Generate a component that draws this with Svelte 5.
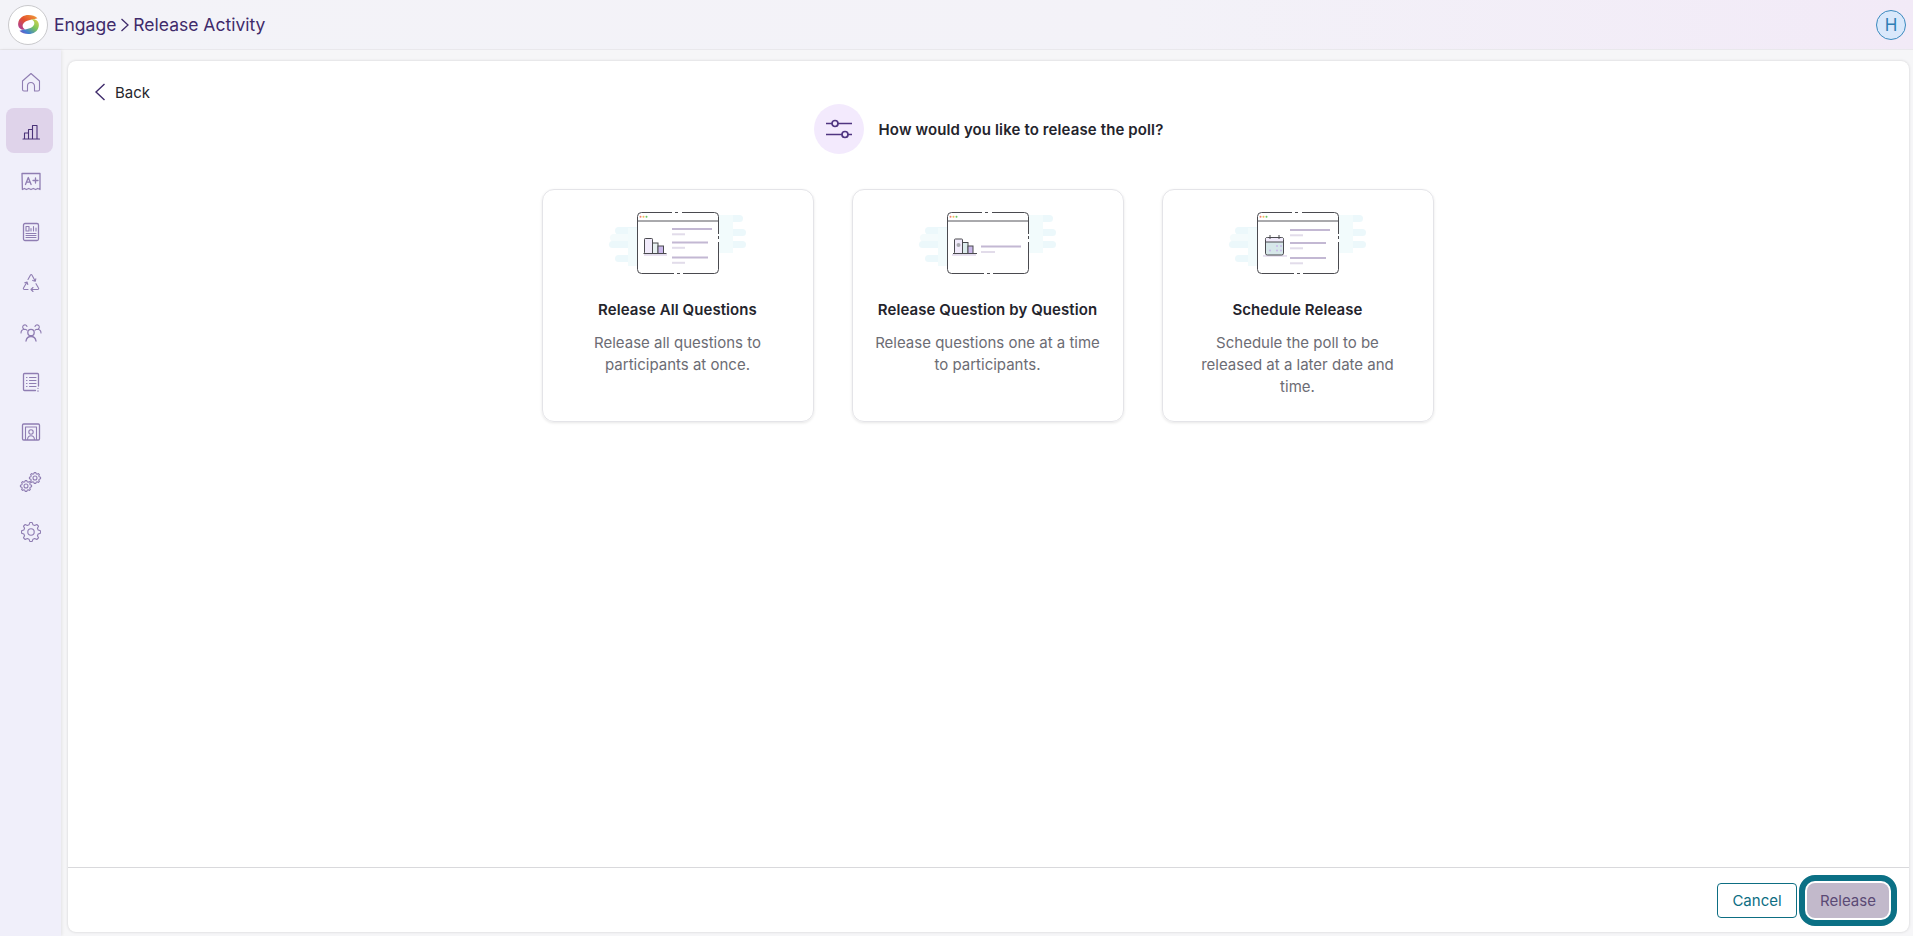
<script>
  const cards = [
    { title: 'Release All Questions', lines: ['Release all questions to', 'participants at once.'], kind: 'all' },
    { title: 'Release Question by Question', lines: ['Release questions one at a time', 'to participants.'], kind: 'single' },
    { title: 'Schedule Release', lines: ['Schedule the poll to be', 'released at a later date and', 'time.'], kind: 'schedule' }
  ];
  const navItems = ['home', 'chart', 'grade', 'report', 'recycle', 'people', 'list', 'board', 'gears', 'gear'];

  // outline of a cog, teeth alternate between two radii
  function cog(cx, cy, r, teeth) {
    const pts = [];
    const inner = r * 0.78;
    for (let i = 0; i < teeth; i++) {
      const step = (Math.PI * 2) / teeth;
      const a = i * step;
      const list = [
        [r, a - step * 0.16],
        [r, a + step * 0.16],
        [inner, a + step * 0.34],
        [inner, a + step * 0.66]
      ];
      for (const [rad, ang] of list) {
        pts.push((cx + rad * Math.cos(ang)).toFixed(2) + ' ' + (cy + rad * Math.sin(ang)).toFixed(2));
      }
    }
    return 'M' + pts.join('L') + 'z';
  }
</script>

{#snippet navIcon(name)}
  <svg class="nav-svg" viewBox="0 0 24 24" width="24" height="24" fill="none" stroke="currentColor" stroke-width="1.1" stroke-linecap="round" stroke-linejoin="round">
    {#if name === 'home'}
      <path d="M3.500 11 12 3.500 20.500 11v8.500a1.500 1.500 0 0 1-1.500 1.500h-3.500v-5a3.500 3.500 0 0 0-7 0v5H5a1.500 1.500 0 0 1-1.500-1.500z" />
    {:else if name === 'chart'}
      <path d="M4 20h16.500M5.500 20v-6h4v6M9.500 20v-9.500h4V20M13.500 20V6.500H18V20" />
    {:else if name === 'grade'}
      <path d="M3 3.500h18v16l-2.200-1-2.200 1-2.300-1-2.300 1-2.300-1-2.300 1-2-1-2 1z" stroke-width="1.300" />
      <path d="M6.500 14.500 9.300 7.500l2.800 7M7.600 12.200h3.400M14 10.500h5M16.500 8v5" stroke-width="1.300" />
    {:else if name === 'report'}
      <rect x="4.500" y="3.500" width="15" height="17" rx="1.500" stroke-width="1.300" />
      <path d="M7 6.500h3v4.500H7zM12 11V8.500M14.500 11V6.500M17 11V8M7 13.500h10M7 15.500h10M7 17.500h10" />
    {:else if name === 'recycle'}
      <path d="M9 9.500 11.500 5c.4-.7 1-.7 1.400 0l3.300 6M16.800 8.800l-.6 2.500-2.500-.9M8 12l-3.500 6c-.4.800 0 1.500 1 1.500H9M5.800 12.800 8 12l.8 2.500M12 19.500h6.500c1 0 1.500-.8 1-1.500l-2.500-4.300M14 17.500l-2 2 2 2" />
    {:else if name === 'people'}
      <circle cx="12" cy="12.500" r="3.200" stroke-width="1.300" />
      <path d="M7 21c.5-3 2.300-4.500 5-4.500s4.500 1.500 5 4.500" stroke-width="1.300" />
      <path d="M8 6.500a2.200 2.200 0 1 0-3.500 2.300M16 6.500a2.200 2.200 0 1 1 3.500 2.300" />
      <path d="M2 13c0-2 1-3.500 3.500-3.800 1 0 2 .3 2.500 1M22 13c0-2-1-3.500-3.500-3.800-1 0-2 .3-2.500 1" />
    {:else if name === 'list'}
      <path d="M19.500 16V4.500a1 1 0 0 0-1-1H5.500a1 1 0 0 0-1 1v15a1 1 0 0 0 1 1h11" stroke-width="1.300" />
      <path d="M7.500 7.500h.5M10.500 7.500h6.500M7.500 10.500h.5M10.500 10.500h6.500M7.500 13.500h.5M10.500 13.500h6.500M7.500 16.500h.5M10.500 16.500h6.500M19 18.300v.1M18.600 21h.8" />
    {:else if name === 'board'}
      <rect x="3.500" y="4" width="17" height="16" rx="1.200" stroke-width="1.300" />
      <path d="M6.500 19.500V7h11v12.500" />
      <circle cx="12" cy="12" r="2.200" />
      <path d="M8.500 19.500c.3-2.300 1.500-3.700 3.500-3.700s3.200 1.400 3.500 3.700" />
    {:else if name === 'gears'}
      <path d={cog(16, 8, 5.600, 8)} />
      <circle cx="16" cy="8" r="2" />
      <path d={cog(7, 16, 5.600, 8)} />
      <circle cx="7" cy="16" r="2" />
    {:else}
      <path d={cog(12, 12, 9.500, 8)} />
      <circle cx="12" cy="12" r="3.200" />
    {/if}
  </svg>
{/snippet}

{#snippet textLines(x, rows)}
  {#each rows as y, i}
    <rect x={x} y={y} width={i === 0 ? 40 : 36} height="2" fill="#c3b8d3" />
    <rect x={x} y={y + 5.300} width="13" height="2" fill="#e2dcea" />
  {/each}
{/snippet}

{#snippet illustration(kind)}
  <svg class="illo" viewBox="0 0 140 70" width="140" height="70">
    <g fill="#ecf8fb">
      <rect x="7" y="19" width="32" height="7.500" rx="3.700" />
      <rect x="2" y="26" width="36" height="7.500" rx="3.700" fill="#f4fbfc" />
      <rect x="1" y="33" width="36" height="7" rx="3.500" />
      <rect x="7" y="47" width="30" height="7" rx="3.500" />
      <rect x="105" y="7" width="30" height="7" rx="3.500" />
      <rect x="110" y="21" width="28" height="7" rx="3.500" />
      <rect x="108" y="33" width="30" height="7" rx="3.500" />
      <rect x="111" y="7" width="14" height="38" fill="#f2fbfc" />
      <rect x="20" y="20" width="14" height="38" fill="#f2fbfc" />
    </g>
    <rect x="29.500" y="4.500" width="81" height="61" rx="4" fill="#fff" stroke="#4a4a4f" stroke-width="1" />
    <path d="M29.500 13h81" stroke="#55555a" stroke-width="1" />
    <circle cx="32.500" cy="8.700" r="1" fill="#ef7f6e" />
    <circle cx="35.500" cy="8.700" r="1" fill="#f2b95c" />
    <circle cx="38.500" cy="8.700" r="1" fill="#6cc968" />
    <path d="M64 4.500h3M70 4.500h4M66 65.500h3M72 65.500h3M110.500 26v2M110.500 31v3" stroke="#fff" stroke-width="1.600" />
    {#if kind === 'all'}
      <rect x="36" y="46" width="23" height="1.800" fill="#e5deee" />
      <rect x="36.500" y="30.500" width="8" height="15" rx=".8" fill="#f1ebfb" stroke="#4a4a4f" />
      <rect x="44.500" y="35" width="5.500" height="10.500" fill="#e8f1f1" stroke="#4a4a4f" />
      <rect x="50" y="38" width="5.500" height="7.500" fill="#c9b8ea" stroke="#4a4a4f" />
      <rect x="35.500" y="45" width="23" height="1" fill="#4a4a4f" />
      {@render textLines(64, [20, 33.500, 48.500])}
    {:else if kind === 'single'}
      <rect x="34" y="46" width="24" height="1.800" fill="#e5deee" />
      <rect x="36.500" y="31" width="8" height="14.500" rx=".8" fill="#f1ebfb" stroke="#4a4a4f" />
      <circle cx="40.500" cy="37" r="2" fill="#a9a9b0" />
      <rect x="44.500" y="34.500" width="5.500" height="11" fill="#dcecec" stroke="#4a4a4f" />
      <rect x="50" y="38" width="5" height="7.500" fill="#c9b8ea" stroke="#4a4a4f" />
      <rect x="35" y="45" width="24" height="1" fill="#4a4a4f" />
      <rect x="63" y="37.500" width="40" height="2" fill="#c3b8d3" />
      <rect x="63" y="43" width="14" height="2" fill="#e2dcea" />
    {:else}
      <rect x="35" y="47" width="24" height="1.800" fill="#e5deee" />
      <rect x="37.500" y="29.500" width="18" height="17.500" rx="1.800" fill="#d6e7e9" stroke="#4a4a4f" stroke-width="1" />
      <path d="M38 30h17v4H38z" fill="#f1ebfb" />
      <path d="M37.500 34h18" stroke="#4a4a4f" />
      <path d="M42 27v4M51 27v4" stroke="#4a4a4f" />
      <g fill="#c9b8ea">
        <circle cx="49" cy="38" r="1" />
        <circle cx="53" cy="38" r="1" />
        <circle cx="42" cy="42.500" r="1" />
        <circle cx="49" cy="42.500" r="1" />
        <circle cx="53" cy="42.500" r="1" />
      </g>
      {@render textLines(62, [21, 34, 49])}
    {/if}
  </svg>
{/snippet}

<div class="shell">
  <header class="topbar">
    <div class="logo">
      <svg viewBox="0 0 24 24" width="27" height="27">
        <defs>
          <linearGradient id="swirlA" x1="1" y1="0" x2="0" y2="1">
            <stop offset="0" stop-color="#f0a13a" />
            <stop offset=".5" stop-color="#e4522f" />
            <stop offset="1" stop-color="#a23aa8" />
          </linearGradient>
          <linearGradient id="swirlB" x1="0" y1="1" x2="1" y2="0">
            <stop offset="0" stop-color="#e2d34a" />
            <stop offset=".4" stop-color="#7cc65a" />
            <stop offset=".75" stop-color="#3f7fd4" />
            <stop offset="1" stop-color="#8a3fb5" />
          </linearGradient>
        </defs>
        <path d="M20 6.500C15 1.800 4 2.500 2.800 11c-.4 3.800 2.700 6.300 6.700 5.500C6.500 15.500 6 12.500 8 10.500 10.500 8 15.500 7.800 20 6.500z" fill="url(#swirlA)" />
        <path d="M20 6.500C15 1.800 4 2.500 2.800 11c-.4 3.800 2.700 6.300 6.700 5.500C6.500 15.500 6 12.500 8 10.500 10.500 8 15.500 7.800 20 6.500z" fill="url(#swirlB)" transform="rotate(180 12 12)" />
      </svg>
    </div>
    <span class="crumb">Engage</span>
    <svg class="crumb-sep" viewBox="0 0 10 16" width="10" height="16" fill="none" stroke="#3f2b6b" stroke-width="1.300"><path d="M1.500 2 8 8l-6.500 6" /></svg>
    <span class="crumb">Release Activity</span>
    <div class="avatar">H</div>
  </header>

  <div class="body">
    <nav class="sidebar">
      {#each navItems as item}
        <div class="nav-item" class:active={item === 'chart'}>
          {@render navIcon(item)}
        </div>
      {/each}
    </nav>

    <main class="panel">
      <div class="content">
        <div class="back">
          <svg viewBox="0 0 12 18" width="12" height="18" fill="none" stroke="#3f2b6b" stroke-width="1.400"><path d="M10.500 1 2 9l8.500 8" /></svg>
          <span>Back</span>
        </div>

        <div class="question">
          <div class="question-icon">
            <svg viewBox="0 0 28 24" width="28" height="24" fill="none" stroke="#4f3581" stroke-width="1.700">
              <path d="M1 6.500h6M13 6.500h14M1 17.500h16M23 17.500h4" />
              <circle cx="10" cy="6.500" r="3" />
              <circle cx="20" cy="17.500" r="3" />
            </svg>
          </div>
          <h1>How would you like to release the poll?</h1>
        </div>

        <div class="cards">
          {#each cards as card}
            <div class="card">
              {@render illustration(card.kind)}
              <h2>{card.title}</h2>
              <p>
                {#each card.lines as line}
                  <span>{line}</span>
                {/each}
              </p>
            </div>
          {/each}
        </div>
      </div>

      <footer class="actions">
        <button class="btn cancel">Cancel</button>
        <button class="btn release">Release</button>
      </footer>
    </main>
  </div>
</div>

<style>
  :global(body) {
    margin: 0;
    font-family: Inter, "Noto Sans", sans-serif;
  }
  .shell {
    display: flex;
    flex-direction: column;
    height: 936px;
    overflow: hidden;
    background: #f6f6f8;
  }
  .topbar {
    display: flex;
    align-items: center;
    height: 49px;
    flex: none;
    padding: 0 7px 0 8px;
    background: linear-gradient(90deg, #f3f3f8 0%, #f3f2f8 60%, #f2eaf7 100%);
    border-bottom: 1px solid #e9e8ec;
  }
  .logo {
    display: flex;
    align-items: center;
    justify-content: center;
    width: 38px;
    height: 38px;
    margin-right: 6px;
    border: 1px solid #c9c9cc;
    border-radius: 50%;
    background: #fff;
  }
  .crumb {
    font-size: 17.5px;
    color: #3f2b6b;
  }
  .crumb-sep {
    margin: 0 3px 0 4px;
  }
  .avatar {
    display: flex;
    align-items: center;
    justify-content: center;
    width: 28px;
    height: 28px;
    margin-left: auto;
    border: 1px solid #3b8abf;
    border-radius: 50%;
    background: #d9e8fb;
    color: #2f7fb5;
    font-size: 17px;
  }
  .body {
    display: flex;
    flex: 1;
    min-height: 0;
  }
  .sidebar {
    display: flex;
    flex-direction: column;
    align-items: center;
    gap: 5px;
    width: 61px;
    flex: none;
    padding: 8px 2px 0 0;
    box-sizing: border-box;
    background: #f0effa;
    box-shadow: 1px 0 3px rgba(0, 0, 0, 0.08);
  }
  .nav-item {
    display: flex;
    align-items: center;
    justify-content: center;
    width: 47px;
    height: 45px;
    border-radius: 8px;
    color: #8f7db2;
  }
  .nav-svg {
    margin: 2px 0 0 2px;
  }
  .nav-item.active {
    background: #dfd3ea;
    color: #4a3278;
  }
  .nav-item.active .nav-svg {
    margin-top: 0;
  }
  .panel {
    display: flex;
    flex-direction: column;
    flex: 1;
    margin: 11px 4px 4px 7px;
    border-radius: 8px;
    background: #fff;
    box-shadow: 0 0 3px rgba(0, 0, 0, 0.16);
  }
  .content {
    flex: 1;
    padding: 19px 0 0 26px;
  }
  .back {
    display: flex;
    align-items: center;
    gap: 9px;
    height: 24px;
    font-size: 15px;
    color: #26262c;
  }
  .question {
    display: flex;
    align-items: center;
    justify-content: center;
    gap: 15px;
    margin: 0 26px 0 0;
  }
  .question-icon {
    display: flex;
    align-items: center;
    justify-content: center;
    width: 50px;
    height: 50px;
    border-radius: 50%;
    background: #f3eafd;
  }
  h1 {
    margin: 0;
    font-size: 15px;
    font-weight: 600;
    letter-spacing: 0.12px;
    color: #24242c;
  }
  .cards {
    display: flex;
    justify-content: center;
    gap: 38px;
    margin: 35px 28px 0 0;
  }
  .card {
    display: flex;
    flex-direction: column;
    align-items: center;
    width: 272px;
    height: 233px;
    box-sizing: border-box;
    padding: 18px 0 0;
    border: 1px solid #e4e4e8;
    border-radius: 12px;
    box-shadow: 0 1px 3px rgba(0, 0, 0, 0.1);
    text-align: center;
  }
  h2 {
    margin: 22px 0 0;
    font-size: 15px;
    line-height: 20px;
    font-weight: 600;
    letter-spacing: 0.08px;
    color: #24242c;
  }
  p {
    margin: 12px 0 0;
    font-size: 15px;
    line-height: 22px;
    color: #6c6c74;
  }
  p span {
    display: block;
  }
  .actions {
    display: flex;
    justify-content: flex-end;
    align-items: center;
    gap: 10px;
    height: 65px;
    flex: none;
    padding-right: 20px;
    box-sizing: border-box;
    border-top: 1px solid #d9d9dc;
  }
  .btn {
    height: 35px;
    border-radius: 4px;
    font-family: inherit;
    font-size: 15px;
    box-sizing: border-box;
  }
  .cancel {
    width: 80px;
    border: 1.5px solid #0d6e83;
    background: #fff;
    color: #0d6e83;
  }
  .release {
    width: 82px;
    border: none;
    border-radius: 8px;
    background: #c2b9cb;
    color: #5b4a75;
    outline: 6px solid #0b7085;
    outline-offset: 2px;
  }
</style>
